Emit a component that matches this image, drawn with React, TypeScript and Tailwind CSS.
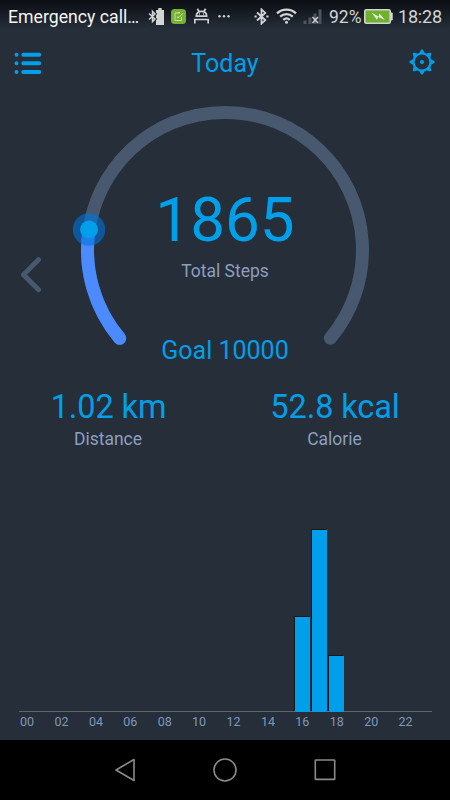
import type { ReactNode } from "react";

const GAUGE_RADIUS = 137.5;

// steps per hour, as bar heights in px
const hourlyBars: Record<number, number> = { 16: 95, 17: 182, 18: 56 };

const stats = [
  { value: "1.02 km", label: "Distance", box: "w-[216px]" },
  { value: "52.8 kcal", label: "Calorie", box: "flex-1 pl-[3px]" },
];

function Bluetooth({ className }: { className: string }) {
  return (
    <svg className={className} viewBox="0 0 15 17" fill="none" stroke="#d2d4d5" strokeWidth="1.8">
      <path d="M3 4.5l8.3 7.6L7.5 15.6V1.4l3.8 3.5L3 12.5" />
      <path d="M0.5 8.5h2.2M12.3 8.5h2.2" />
    </svg>
  );
}

function StatusBar() {
  return (
    <div className="flex h-8 items-center bg-linear-to-b from-[#0b0e12] to-[#252e39] to-90% pl-2 text-[18px] leading-8 text-[#d2d4d5]">
      <span className="w-[140px] whitespace-nowrap pt-px text-[17.7px] text-[#f4f4f4]">Emergency call…</span>

      {/* Notifications */}
      <svg className="h-[17px] w-[17px]" viewBox="0 0 17 17" fill="none">
        <path d="M8 2h2.300V0h3.400v2H16v15H8z" fill="#d2d4d5" />
        <path d="M1 5.500l6 5.500-2.500 2.700V3.300L7 6l-6 5.500" stroke="#1a2028" strokeWidth="3.200" />
        <path d="M1 5.500l6 5.500-2.500 2.700V3.300L7 6l-6 5.500" stroke="#d2d4d5" strokeWidth="1.500" />
      </svg>
      <svg className="ml-1.5 h-[15px] w-[15px]" viewBox="0 0 15 15" fill="none">
        <rect width="15" height="15" rx="3.500" fill="#76b133" />
        <path d="M10.500 8v3.500H4V4h5M6.500 3.500h2.500M11.700 4.500L8 8.300l-1.700.7.500-1.700" stroke="#c5dfa4" />
      </svg>
      <svg className="ml-2 h-4 w-[15px]" viewBox="0 0 15 16" fill="none" stroke="#d2d4d5" strokeWidth="1.700">
        <path d="M2.300 8.200C2.300 5 4.300 3.300 7.500 3.300s5.200 1.700 5.200 4.900z" />
        <path d="M3.400.7l1.700 2.900M11.600.7L9.900 3.600M.8 15.500v-4h13.400v4" />
        <path d="M5 6h1M9 6h1" />
      </svg>
      <svg className="ml-[9px] h-[3px] w-3" viewBox="0 0 12 3" fill="#d2d4d5">
        <circle cx="1.500" cy="1.300" r="1.200" />
        <circle cx="6" cy="1.300" r="1.200" />
        <circle cx="10.500" cy="1.300" r="1.200" />
      </svg>

      {/* System */}
      <Bluetooth className="ml-6 h-[17px] w-[15px]" />
      <svg className="ml-[7px] h-4 w-[21px]" viewBox="0 0 21 16" fill="none" stroke="#d2d4d5" strokeWidth="2.300">
        <path d="M1 5.300c5.300-5 13.700-5 19 0M4.200 8.600c3.600-3.400 9-3.400 12.600 0M7.300 11.800c1.900-1.700 4.500-1.700 6.400 0" />
        <circle cx="10.500" cy="14.300" r="1.500" fill="#d2d4d5" stroke="none" />
      </svg>
      <svg className="ml-1.5 h-[15px] w-[19px]" viewBox="0 0 19 15">
        <path d="M.5 11.500h3V15h-3zM5.500 8.500h3V15h-3zM10.500 4.500h3V15h-3zM15.500.5h3V15h-3z" fill="#4d545d" />
        <path d="M9.500 8l5.500 6M15 8l-5.500 6" stroke="#d2d4d5" strokeWidth="1.500" />
      </svg>
      <span className="ml-[7px] w-[35px] whitespace-nowrap pt-px text-[17.5px]">92%</span>
      <svg className="h-[15px] w-[29px]" viewBox="0 0 29 15">
        <rect x=".8" y=".8" width="25.400" height="13.400" rx="1.500" fill="#6fb12c" stroke="#d2d4d5" strokeWidth="1.600" />
        <path d="M27 4h1.200v7H27z" fill="#d2d4d5" stroke="#d2d4d5" />
        <path d="M7.500 3.500l7 4 1-3L21 11l-7-3-1 3z" fill="#e4e6e2" />
      </svg>
      <span className="ml-[5px] whitespace-nowrap pt-px tracking-[-0.2px]">18:28</span>
    </div>
  );
}

function Header() {
  return (
    <header className="flex h-[63px] items-center justify-between pr-[15px] pb-px pl-3.5 text-[#009fe9]">
      <svg className="h-6 w-[27px]" viewBox="0 0 27 24" stroke="currentColor" strokeWidth="4" strokeLinecap="round">
        <path d="M9.300 3.700h15.900M9.300 12.200h15.900M9.300 20.900h15.900" />
        <path d="M2.500 3.700h.01M2.500 12.200h.01M2.500 20.900h.01" />
      </svg>
      <h1 className="pt-px text-[25px] leading-8">Today</h1>
      <svg className="-mt-[2px] h-[26px] w-[26px]" viewBox="-13 -13 26 26" fill="currentColor">
        <circle r="8.500" fill="none" stroke="currentColor" strokeWidth="2.200" />
        <circle r="2" />
        {[0, 45, 90, 135, 180, 225, 270, 315].map((angle) => (
          <path key={angle} d="M-3-8.800L-1.400-11.200a1.400 1.400 0 0 1 2.800 0L3-8.800z" transform={`rotate(${angle})`} />
        ))}
      </svg>
    </header>
  );
}

function Gauge() {
  return (
    <section className="relative h-[270px]">
      <svg className="h-[270px] w-[450px]" viewBox="0 95 450 270" fill="none" strokeWidth="13" strokeLinecap="round">
        <path d={`M119.700 338.300A${GAUGE_RADIUS} ${GAUGE_RADIUS} 0 1 1 330.300 338.300`} stroke="#47586f" />
        <path d={`M119.700 338.300A${GAUGE_RADIUS} ${GAUGE_RADIUS} 0 0 1 89 229.500`} stroke="#4b8bff" strokeLinecap="butt" />
        <path d="M119.700 338.300h.01" stroke="#4b8bff" />
        <circle cx="89" cy="229.500" r="16.200" fill="#0073de" fillOpacity=".6" />
        <circle cx="89" cy="229.500" r="9" fill="#009fe9" />
      </svg>
      <svg className="absolute top-[160px] left-[18px] h-10 w-6" viewBox="0 0 24 40" fill="none" stroke="#47586f" strokeWidth="5" strokeLinecap="round" strokeLinejoin="round">
        <path d="M20.500 4.700L5.500 19.700 20.500 34.700" />
      </svg>
      <div className="absolute inset-0 flex flex-col items-center pt-[93px] text-[#009fe9]">
        <div className="text-[62px] leading-[64px]">1865</div>
        <div className="mt-[9px] text-[17.500px] leading-5 text-[#8c9fbf]">Total Steps</div>
        <div className="mt-[55px] text-[25px] leading-[30px]">Goal 10000</div>
      </div>
    </section>
  );
}

function HourlyChart() {
  return (
    <section className="mt-auto pr-[18.500px] pb-2 pl-[18.500px]">
      <div className="flex h-[183px] items-end border-b border-[#5d646c]">
        {Array.from({ length: 24 }, (_, hour) => (
          <div key={hour} className="flex-1 px-px">
            {hourlyBars[hour] && (
              <div
                className="relative -mb-px bg-[#009fe9] shadow-[-1px_-1px_0_#14161a]"
                style={{ height: hourlyBars[hour] }}
              />
            )}
          </div>
        ))}
      </div>
      <div className="flex text-[12.500px] leading-5 text-[#8298b9]">
        {Array.from({ length: 24 }, (_, hour) => (
          <div key={hour} className="flex w-0 flex-1 justify-center">
            {hour % 2 === 0 && <span>{String(hour).padStart(2, "0")}</span>}
          </div>
        ))}
      </div>
    </section>
  );
}

function NavIcon({ children }: { children: ReactNode }) {
  return (
    <svg className="h-6 w-6" viewBox="0 0 24 24" fill="none" stroke="#8a8a8a" strokeWidth="1.600" strokeLinejoin="round">
      {children}
    </svg>
  );
}

export default function App() {
  return (
    <div className="flex h-[800px] w-[450px] flex-col overflow-hidden bg-[#252e39] font-['Roboto',sans-serif]">
      <StatusBar />
      <Header />
      <Gauge />

      <section className="flex pt-[21px] text-center">
        {stats.map((stat) => (
          <div key={stat.label} className={stat.box}>
            <div className="pt-px pl-px text-[32.500px] leading-10 tracking-[-0.1px] text-[#009fe9]">{stat.value}</div>
            <div className="mt-[2px] text-[17.500px] leading-5 text-[#8c9fbf]">{stat.label}</div>
          </div>
        ))}
      </section>

      <HourlyChart />

      <nav className="flex h-[60px] items-center justify-center gap-[76px] bg-black">
        <NavIcon>
          <path d="M3 12L21 1.500v21z" />
        </NavIcon>
        <NavIcon>
          <circle cx="12" cy="12" r="11" />
        </NavIcon>
        <NavIcon>
          <rect x="2.300" y="2" width="19.400" height="19.400" rx=".5" />
        </NavIcon>
      </nav>
    </div>
  );
}
